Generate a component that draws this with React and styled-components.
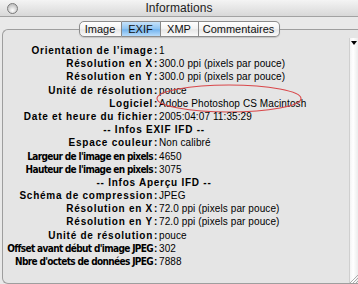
import styled, { createGlobalStyle } from "styled-components";

const GlobalStyle = createGlobalStyle`
  html, body {
    margin: 0;
    padding: 0;
    background: #e9e9e9;
  }
  body {
    width: 358px;
    height: 284px;
    overflow: hidden;
    font-family: "Liberation Sans", Arial, sans-serif;
  }
`;

const Window = styled.div`
  width: 358px;
  height: 284px;
  display: flex;
  flex-direction: column;
  background: #e9e9e9;
  overflow: hidden;
`;

const TitleBar = styled.div`
  flex: none;
  height: 16px;
  display: grid;
  grid-template-columns: 1fr auto 1fr;
  align-items: center;
  background: linear-gradient(#f4f4f4, #d8d8d8);
  border-bottom: 1px solid #a2a2a2;
`;

const CloseButton = styled.span`
  width: 9px;
  height: 9px;
  margin-left: 7px;
  border-radius: 50%;
  border: 1px solid #7a7a7a;
  background: radial-gradient(circle at 50% 70%, #ffffff, #c4c4c4 70%);
`;

const Title = styled.span`
  font-size: 12px;
  color: #1c1c1c;
  letter-spacing: 0.1px;
`;

const Body = styled.div`
  flex: 1;
  display: flex;
  flex-direction: column;
  padding: 4px 0 0 2px;
  min-height: 0;
`;

const TabBar = styled.div`
  position: relative;
  z-index: 1;
  display: flex;
  justify-content: center;
  margin-left: -2px;
  margin-bottom: -8px;
`;

const Tab = styled.div`
  box-sizing: border-box;
  width: ${(p) => p.$width}px;
  height: 16px;
  display: flex;
  align-items: center;
  justify-content: center;
  font-size: 11px;
  color: #111;
  border: 1px solid #8c8c8c;
  border-left-width: ${(p) => (p.$first ? 1 : 0)}px;
  border-radius: ${(p) => (p.$first ? "5px 0 0 5px" : p.$last ? "0 5px 5px 0" : "0")};
  background: ${(p) =>
    p.$active
      ? "linear-gradient(#c6e2fa, #8ec4f2 50%, #74b4ee 55%, #b8dcfb)"
      : "linear-gradient(#ffffff, #f2f2f2 50%, #e6e6e6 55%, #fafafa)"};
  box-shadow: 0 1px 1px rgba(0, 0, 0, 0.15);
`;

const Panel = styled.div`
  flex: 1;
  display: flex;
  border: 1px solid #9e9e9e;
  border-right: none;
  border-radius: 6px 0 0 6px;
  background: #e5e5e5;
  padding-top: 8px;
  min-height: 0;
`;

const Content = styled.div`
  position: relative;
  flex: 1;
  padding: 6px 0 0 1px;
`;

const Row = styled.div`
  display: grid;
  grid-template-columns: 149px 6px 1fr;
  height: 13.2px;
  line-height: 13.2px;
  font-size: 10px;
  white-space: nowrap;
`;

const Label = styled.span`
  text-align: right;
  font-weight: bold;
  color: #000;
  letter-spacing: ${(p) => (p.$narrow ? "-0.65px" : "0.75px")};
  font-family: ${(p) =>
    p.$narrow
      ? '"Liberation Sans Narrow", "DejaVu Sans Condensed", "Liberation Sans", sans-serif'
      : '"Liberation Sans", Arial, sans-serif'};
  font-stretch: ${(p) => (p.$narrow ? "condensed" : "normal")};
`;

const Colon = styled.span`
  font-weight: bold;
  text-align: left;
  padding-left: 1px;
`;

const Value = styled.span`
  position: relative;
  color: #000;
  letter-spacing: 0.1px;
`;

const Header = styled.div`
  width: 300px;
  height: 13.2px;
  line-height: 13.2px;
  font-size: 10px;
  font-weight: bold;
  letter-spacing: 0.75px;
  text-align: center;
  white-space: nowrap;
`;

const Ellipse = styled.svg`
  position: absolute;
  left: -4px;
  top: -14px;
  pointer-events: none;
`;

const ScrollStrip = styled.div`
  flex: none;
  width: 8px;
  display: flex;
  flex-direction: column;
  justify-content: space-between;
  background: linear-gradient(90deg, #f4f4f4, #ffffff 40%, #ececec);
  border-left: 1px solid #cfcfcf;
`;

const Arrow = styled.span`
  margin: 3px 0 0 1px;
  width: 0;
  height: 0;
  border-left: 3px solid transparent;
  border-right: 3px solid transparent;
  border-top: 4px solid #000;
`;

const Grip = () => (
  <svg width="8" height="9" viewBox="0 0 8 9">
    <path d="M8 1 L0 9 M8 4 L3 9 M8 7 L6 9" stroke="#9a9a9a" strokeWidth="0.8" />
  </svg>
);

const tabs = [
  { name: "Image", width: 43 },
  { name: "EXIF", width: 39, active: true },
  { name: "XMP", width: 38 },
  { name: "Commentaires", width: 81 },
];

const rows = [
  ["Orientation de l’image", "1"],
  ["Résolution en X", "300.0 ppi (pixels par pouce)"],
  ["Résolution en Y", "300.0 ppi (pixels par pouce)"],
  ["Unité de résolution", "pouce"],
  ["Logiciel", "Adobe Photoshop CS Macintosh", "circled"],
  ["Date et heure du fichier", "2005:04:07 11:35:29"],
  ["-- Infos EXIF IFD --"],
  ["Espace couleur", "Non calibré"],
  ["Largeur de l'image en pixels", "4650", "narrow"],
  ["Hauteur de l'image en pixels", "3075", "narrow"],
  ["-- Infos Aperçu IFD --"],
  ["Schéma de compression", "JPEG"],
  ["Résolution en X", "72.0 ppi (pixels par pouce)"],
  ["Résolution en Y", "72.0 ppi (pixels par pouce)"],
  ["Unité de résolution", "pouce"],
  ["Offset avant début d'image JPEG", "302", "narrow"],
  ["Nbre d'octets de données JPEG", "7888", "narrow"],
];

export default function App() {
  return (
    <Window>
      <GlobalStyle />
      <TitleBar>
        <CloseButton />
        <Title>Informations</Title>
        <span />
      </TitleBar>
      <Body>
        <TabBar>
          {tabs.map((t, i) => (
            <Tab
              key={t.name}
              $width={t.width}
              $active={t.active}
              $first={i === 0}
              $last={i === tabs.length - 1}
            >
              {t.name}
            </Tab>
          ))}
        </TabBar>
        <Panel>
          <Content>
            {rows.map(([label, value, kind], i) =>
              value === undefined ? (
                <Header key={i}>{label}</Header>
              ) : (
                <Row key={i}>
                  <Label $narrow={kind === "narrow"}>{label}</Label>
                  <Colon>:</Colon>
                  <Value>
                    {value}
                    {kind === "circled" && (
                      <Ellipse width="150" height="32" viewBox="0 0 150 32">
                        <ellipse
                          cx="74"
                          cy="15.5"
                          rx="72"
                          ry="13.5"
                          fill="none"
                          stroke="#d9474a"
                          strokeWidth="1.1"
                        />
                      </Ellipse>
                    )}
                  </Value>
                </Row>
              )
            )}
          </Content>
          <ScrollStrip>
            <Arrow />
            <Grip />
          </ScrollStrip>
        </Panel>
      </Body>
    </Window>
  );
}
